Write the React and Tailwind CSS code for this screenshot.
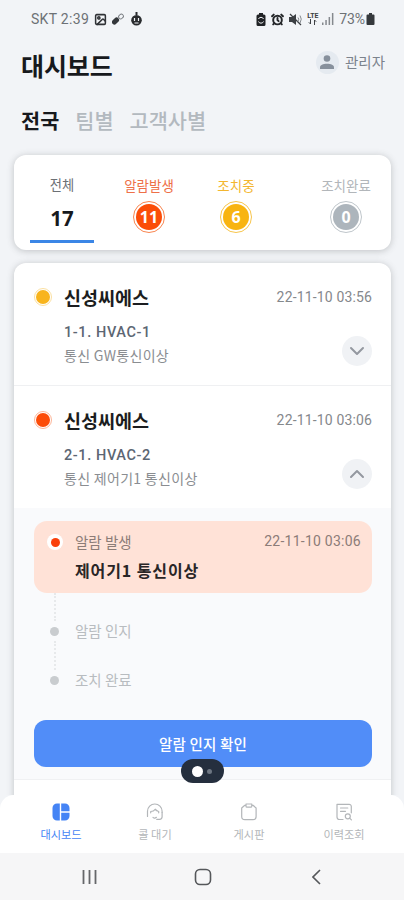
import React, { useState } from 'react'
import { Image, AlarmClock, ChevronDown, ChevronUp, ChevronLeft } from 'lucide-react'

const regions = ['전국', '팀별', '고객사별']

const counts = [
  { label: '알람발생', value: 11, left: 'ml-[12px] w-[86px]', text: 'text-[#ee7048]', ring: 'border-[#f9854f]', fill: 'bg-[#fb4d08]' },
  { label: '조치중',   value: 6,  left: 'ml-[1px] w-[86px]',  text: 'text-[#f3b62f]', ring: 'border-[#f7c54c]', fill: 'bg-[#f8b411]' },
  { label: '조치완료', value: 0,  left: 'ml-[24px] w-[86px]', text: 'text-[#b2b6ba]', ring: 'border-[#bfc6cb]', fill: 'bg-[#adb5bc]' },
]

const alarms = [
  { name: '신성씨에스', unit: '1-1. HVAC-1', desc: '통신 GW통신이상',      time: '22-11-10 03:56', dot: 'bg-[#f8b41c]', ring: 'border-[#fbe0a0]' },
  { name: '신성씨에스', unit: '2-1. HVAC-2', desc: '통신 제어기1 통신이상', time: '22-11-10 03:06', dot: 'bg-[#fc4c08]', ring: 'border-[#fdb598]' },
]

function DashboardIcon() {
  return (
    <svg width="18" height="18" viewBox="0 0 18 18" fill="#4584f5">
      <path d="M5 .5h2.8v17H5A4.500 4.500 0 0 1 .5 13V5A4.500 4.500 0 0 1 5 .5z" />
      <path d="M9.200 .5H13A4.500 4.500 0 0 1 17.500 5v3.300H9.200zM9.200 9.700h8.300V13a4.500 4.500 0 0 1-4.500 4.500H9.200z" />
    </svg>
  )
}

function CallIcon() {
  return (
    <svg width="18" height="18" viewBox="0 0 18 18" fill="none" stroke="currentColor" strokeWidth="1.200" strokeLinecap="round" strokeLinejoin="round">
      <path d="M1.500 13.500V8.300a7.300 7.300 0 0 1 14.600 0v1.200" />
      <path d="M4.700 9.800V8.500c2.200 0 3.600-.9 4.500-2.300 1 1.500 1.800 2 3.500 2.300v1.300" />
      <path d="M16.100 9.500v4.300c0 1.800-1 2.500-2.500 2.500h-2.900" />
      <path d="M7 14.300c.9.900 2.400.9 3.400 0" />
    </svg>
  )
}

function BoardIcon() {
  return (
    <svg width="18" height="18" viewBox="0 0 18 18" fill="none" stroke="currentColor" strokeWidth="1.200" strokeLinejoin="round">
      <path d="M6 2.300H4.800L1.700 5v8.500a3.200 3.200 0 0 0 3.200 3.200h8a3.200 3.200 0 0 0 3.200-3.200V5L13 2.300h-1.200" />
      <path d="M6 1h5.800v2.200a1 1 0 0 1-1 1H7a1 1 0 0 1-1-1z" />
    </svg>
  )
}

function HistoryIcon() {
  return (
    <svg width="18" height="18" viewBox="0 0 18 18" fill="none" stroke="currentColor" strokeWidth="1.200" strokeLinecap="round" strokeLinejoin="round">
      <path d="M8 16.500H4.500a2.500 2.500 0 0 1-2.500-2.500V1.300h12A2.200 2.200 0 0 1 16.300 3.500v6.300" />
      <path d="M5.500 5h7.300M5.500 8.300h5" />
      <circle cx="12.800" cy="13.300" r="2.500" />
      <path d="M14.700 15.200l1.700 1.700" />
    </svg>
  )
}

const tabs = [
  { label: '대시보드', icon: DashboardIcon, width: 'w-[94px]', active: true },
  { label: '콜 대기',  icon: CallIcon,      width: 'w-[94px]' },
  { label: '게시판',   icon: BoardIcon,     width: 'w-[94px]' },
  { label: '이력조회', icon: HistoryIcon,   width: 'w-[96px]' },
]

function StatusBar() {
  return (
    <div className="flex h-[38px] shrink-0 items-center pl-[31px] pr-[29px] font-[Roboto,sans-serif] text-[14px] text-[#6d7175]">
      <span className="tracking-[0.300px]">SKT 2:39</span>
      <Image size={13} strokeWidth={2.800} className="ml-[5px] text-[#303236]" />
      <svg width="13" height="13" viewBox="0 0 13 13" className="ml-[5px]" fill="#34373b">
        <rect x="-.5" y="5.500" width="8" height="5" rx="2.500" transform="rotate(-45 3.500 8)" />
        <rect x="6.500" y="1.500" width="5" height="4" rx="2" transform="rotate(-45 9 3.500)" fill="none" stroke="#777b80" />
      </svg>
      <svg width="13" height="14" viewBox="0 0 13 14" className="ml-[5px]" fill="#292b2e">
        <path d="M5.500 0h2v3h-2z" />
        <circle cx="6.500" cy="8.300" r="5.300" />
        <path d="M4.500 6v3M8.500 6v3M4.500 11h4" stroke="#f2f4f7" strokeWidth="1.200" />
      </svg>
      <div className="ml-auto flex items-center">
        <svg width="10" height="13" viewBox="0 0 10 13" fill="#202225">
          <path d="M3 0h4v1.500h1a1.500 1.500 0 0 1 1.500 1.500v8.500A1.500 1.500 0 0 1 8 13H2a1.500 1.500 0 0 1-1.500-1.500V3A1.500 1.500 0 0 1 2 1.500h1z" />
          <path d="M2.500 6A2.700 2.700 0 0 1 7.500 6M7.500 8.500a2.700 2.700 0 0 1-5 0" stroke="#f2f4f7" fill="none" />
        </svg>
        <AlarmClock size={13} strokeWidth={3.600} className="ml-[5px] text-[#25272a]" />
        <svg width="13" height="13" viewBox="0 0 13 13" className="ml-[5px]" fill="#3c3f43">
          <path d="M0 4h3l4-3v11L3 9H0z" />
          <path d="M1 1l11 11" stroke="#3c3f43" strokeWidth="1.300" />
          <path d="M9 4.500q1.500 1.500 0 4M11 2.500q2.500 3.500 0 7.500" fill="none" stroke="#85898e" />
        </svg>
        <span className="ml-[4px] flex w-[13px] flex-col items-center text-[7px] leading-[6px] font-bold text-[#3c3f43]">
          <span>LTE</span>
          <svg width="9" height="6" viewBox="0 0 9 6" fill="none" stroke="currentColor"><path d="M2.500 0v5L.8 3.300M6.500 6V1l1.700 1.700" /></svg>
        </span>
        <svg width="12" height="12" viewBox="0 0 12 12" className="ml-[3px]" fill="#85898e">
          <path d="M0 9.500h1.500V12H0zM3.300 7h1.500v5H3.300zM6.600 4h1.500v8H6.600zM9.900 0h1.500v12H9.900z" />
        </svg>
        <span className="ml-[5px] text-[14px] tracking-[-0.100px]">73%</span>
        <svg width="9" height="12" viewBox="0 0 9 12" className="ml-[1px]" fill="#35383c">
          <path d="M3 0h3v1.500h1.500A1 1 0 0 1 8.500 2.500V11a1 1 0 0 1-1 1h-6a1 1 0 0 1-1-1V2.500a1 1 0 0 1 1-1H3z" />
        </svg>
      </div>
    </div>
  )
}

function Header() {
  return (
    <header className="flex h-14 shrink-0 items-center justify-between pl-[21px] pr-[19px]">
      <h1 className="mt-[-2px] text-[25px] leading-8 font-bold tracking-[-0.1px] text-[#17191d]">대시보드</h1>
      <div className="mt-[-8px] flex items-center">
        <span className="flex size-[23px] items-center justify-center rounded-full bg-[#e5eaf0]">
          <svg width="14" height="14" viewBox="0 0 14 14" fill="#87909c">
            <circle cx="7" cy="3.500" r="3.300" />
            <path d="M0 14v-1.500C0 10 3 8.800 7 8.800s7 1.200 7 3.700V14z" />
          </svg>
        </span>
        <span className="ml-[6px] text-[14.500px] leading-5 text-[#7c838d]">관리자</span>
      </div>
    </header>
  )
}

function Summary() {
  return (
    <section className="mr-[13px] ml-[14px] flex h-[95px] shrink-0 rounded-[12px] bg-white pl-[16px] shadow-[0_1px_7px_rgba(60,65,70,0.28)]">
      <div className="flex w-[64px] flex-col items-center pt-[20px]">
        <span className="text-[13.300px] leading-5 text-[#6c7075]">전체</span>
        <span className="mt-[9px] font-['Noto_Sans',sans-serif] text-[20.500px] leading-[28px] font-bold text-[#17191d]">17</span>
        <span className="mt-[8px] h-[3px] w-full bg-[#3b86e6]" />
      </div>
      {counts.map(c => (
        <div key={c.label} className={`flex flex-col items-center pt-[20px] ${c.left}`}>
          <span className={`text-[13.500px] leading-5 ${c.text}`}>{c.label}</span>
          <span className={`mt-[6px] flex size-[32px] items-center justify-center rounded-full border ${c.ring}`}>
            <span className={`flex size-[26px] items-center justify-center rounded-full font-['Noto_Sans',sans-serif] text-[16px] leading-none font-bold text-white ${c.fill}`}>
              {c.value}
            </span>
          </span>
        </div>
      ))}
    </section>
  )
}

function AlarmRow({ alarm, open, onToggle }) {
  return (
    <div className="flex h-[122px] pl-[20px] pr-[19px] pt-[21px]">
      <span className={`mt-[4px] flex size-[18px] items-center justify-center rounded-full border ${alarm.ring}`}>
        <span className={`size-[14px] rounded-full ${alarm.dot}`} />
      </span>
      <div className="ml-[12px] flex-1">
        <div className="flex items-center justify-between">
          <h2 className="text-[18.500px] leading-[26px] font-bold text-[#1b1d20]">{alarm.name}</h2>
          <time className="font-[Roboto,sans-serif] text-[14px] tracking-[0.150px] text-[#85888c]">{alarm.time}</time>
        </div>
        <div className="flex justify-between">
          <div className="mt-[12px]">
            <p className="font-[Roboto,sans-serif] text-[14.500px] leading-[22px] font-medium tracking-[0.600px] text-[#5c6673]">{alarm.unit}</p>
            <p className="text-[14px] leading-[22px] tracking-[0.300px] whitespace-nowrap text-[#8a8d91]">{alarm.desc}</p>
          </div>
          <button onClick={onToggle} className="mt-[26px] flex size-[30px] items-center justify-center rounded-full bg-[#f0f2f5]">
            {open ? <ChevronUp size={24} className="text-[#9498a0]" /> : <ChevronDown size={24} className="text-[#9498a0]" />}
          </button>
        </div>
      </div>
    </div>
  )
}

function Step({ label }) {
  return (
    <div className="flex items-center pl-[16px]">
      <span className="size-[9px] rounded-full bg-[#c9cccf]" />
      <span className="ml-[16px] text-[14.500px] leading-5 text-[#b8bcc0]">{label}</span>
    </div>
  )
}

function AlarmDetail() {
  return (
    <div className="flex h-[271px] flex-col bg-[#f9fafc] pr-[19px] pl-[20px] pt-[13px]">
      <div className="flex h-[72px] shrink-0 rounded-[13px] bg-[#ffe2d7] pl-[13px] pr-[11px] pt-[9px]">
        <span className="mt-[4px] flex size-[16px] items-center justify-center rounded-full bg-white">
          <span className="size-[9px] rounded-full bg-[#fa400b]" />
        </span>
        <div className="ml-[12px] flex-1">
          <div className="flex items-center justify-between">
            <span className="text-[14.500px] leading-[23px] text-[#8c7c77]">알람 발생</span>
            <time className="font-[Roboto,sans-serif] text-[14px] tracking-[0.250px] text-[#8c7c77]">22-11-10 03:06</time>
          </div>
          <p className="mt-[5px] text-[16px] leading-6 font-bold tracking-[0.900px] text-[#292526]">제어기1 통신이상</p>
        </div>
      </div>
      <div className="ml-[20px] h-[28px] border-l-2 border-dotted border-[#e7e9eb]" />
      <Step label="알람 인지" />
      <div className="ml-[20px] h-[29px] border-l-2 border-dotted border-[#e7e9eb]" />
      <Step label="조치 완료" />
      <button className="mt-[30px] h-[47px] shrink-0 rounded-[12px] bg-[#518df8] text-[14.500px] font-medium tracking-[0.200px] text-white">
        알람 인지 확인
      </button>
    </div>
  )
}

function TabBar() {
  return (
    <nav className="relative flex h-[58px] shrink-0 rounded-t-[14px] bg-white pl-[14px]">
      {tabs.map(({ label, icon: Icon, width, active }) => (
        <button key={label} className={`flex flex-col items-center pt-[8px] ${width} ${active ? 'text-[#4584f5]' : 'text-[#b3b6b9]'}`}>
          <Icon />
          <span className="mt-[5px] text-[11.200px] leading-4">{label}</span>
        </button>
      ))}
      {/* Page indicator floating over the list */}
      <div className="absolute top-[-36px] left-[181px] flex h-[24px] w-[43px] items-center rounded-full bg-[#252f3e] pl-[11px]">
        <span className="size-[11px] rounded-full bg-white" />
        <span className="ml-[4px] size-[5px] rounded-full bg-[#6d7682]" />
      </div>
    </nav>
  )
}

function SystemBar() {
  return (
    <div className="flex h-[47px] shrink-0 items-center bg-[#f6f6f7] pl-[81px]">
      <svg width="18" height="16" viewBox="0 0 18 16" stroke="#65676a" strokeWidth="1.800">
        <path d="M2.500 1v14M8.500 1v14M14.500 1v14" />
      </svg>
      <svg width="18" height="18" viewBox="0 0 18 18" className="ml-[95px]" fill="none" stroke="#55575a" strokeWidth="1.600">
        <rect x="1.500" y="1.500" width="15" height="15" rx="4.500" />
      </svg>
      <svg width="9" height="16" viewBox="0 0 9 16" className="ml-[100px]" fill="none" stroke="#55575a" strokeWidth="1.600">
        <path d="M8 1L1 8l7 7" />
      </svg>
    </div>
  )
}

export default function App() {
  const [region, setRegion] = useState('전국')
  const [opened, setOpened] = useState(1)

  return (
    <div className="flex h-[900px] w-[404px] flex-col overflow-hidden bg-[#f2f4f7] font-['Noto_Sans_CJK_KR',sans-serif]">
      <StatusBar />
      <Header />

      {/* Region filter */}
      <div className="flex h-[61px] shrink-0 gap-[16px] pt-[11px] pl-[21px]">
        {regions.map(r => (
          <button key={r} onClick={() => setRegion(r)}
            className={`h-[30px] text-[20.800px] leading-[30px] ${r === region ? 'font-bold text-[#17191d]' : 'font-medium text-[#b3b9bf]'}`}>
            {r}
          </button>
        ))}
      </div>

      <Summary />

      {/* Alarm list */}
      <main className="flex min-h-0 flex-1 flex-col overflow-hidden pt-[13px] pr-[13px] pl-[14px]">
        <div className="h-[620px] shrink-0 overflow-hidden rounded-t-[12px] bg-white shadow-[0_1px_7px_rgba(60,65,70,0.28)]">
          {alarms.map((a, i) => (
            <div key={a.unit} className={i > 0 ? 'border-t border-[#eff0f2]' : ''}>
              <AlarmRow alarm={a} open={opened === i} onToggle={() => setOpened(opened === i ? -1 : i)} />
              {opened === i && <AlarmDetail />}
            </div>
          ))}
          <div className="border-t border-[#f0f1f3]" />
        </div>
      </main>

      <TabBar />
      <SystemBar />
    </div>
  )
}
